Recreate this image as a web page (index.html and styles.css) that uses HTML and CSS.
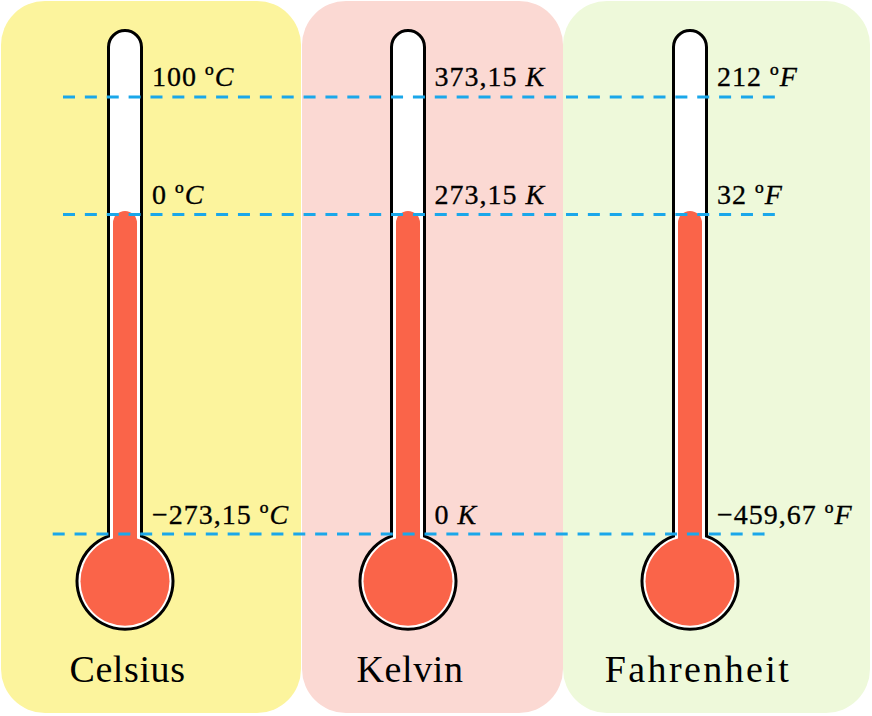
FILE: index.html
```html
<!DOCTYPE html>
<html lang="es">
<head>
<meta charset="utf-8">
<title>Escalas de temperatura</title>
<link rel="stylesheet" href="styles.css">
</head>
<body>
<div class="chart">
  <section class="panel celsius">
    <div class="thermo">
      <svg class="tube" width="104" height="606" viewBox="0 0 104 606" aria-hidden="true">
        <path d="M35.5 509.1 V20 A16.5 16.5 0 0 1 68.5 20 V509.1 A48 48 0 1 1 35.5 509.1 Z" fill="#fff" stroke="#000" stroke-width="3"/>
        <rect x="40" y="184" width="24" height="360" rx="12" fill="#fa6449"/>
        <circle cx="52" cy="554.2" r="44.5" fill="#fa6449"/>
      </svg>
      <ul class="scale">
        <li class="mark mark-boil">100 º<i>C</i></li>
        <li class="mark mark-freeze">0 º<i>C</i></li>
        <li class="mark mark-abs">−273,15 º<i>C</i></li>
      </ul>
    </div>
    <h2 class="title">Celsius</h2>
  </section>
  <section class="panel kelvin">
    <div class="thermo">
      <svg class="tube" width="104" height="606" viewBox="0 0 104 606" aria-hidden="true">
        <path d="M35.5 509.1 V20 A16.5 16.5 0 0 1 68.5 20 V509.1 A48 48 0 1 1 35.5 509.1 Z" fill="#fff" stroke="#000" stroke-width="3"/>
        <rect x="40" y="184" width="24" height="360" rx="12" fill="#fa6449"/>
        <circle cx="52" cy="554.2" r="44.5" fill="#fa6449"/>
      </svg>
      <ul class="scale">
        <li class="mark mark-boil">373,15 <i>K</i></li>
        <li class="mark mark-freeze">273,15 <i>K</i></li>
        <li class="mark mark-abs">0 <i>K</i></li>
      </ul>
    </div>
    <h2 class="title">Kelvin</h2>
  </section>
  <section class="panel fahrenheit">
    <div class="thermo">
      <svg class="tube" width="104" height="606" viewBox="0 0 104 606" aria-hidden="true">
        <path d="M35.5 509.1 V20 A16.5 16.5 0 0 1 68.5 20 V509.1 A48 48 0 1 1 35.5 509.1 Z" fill="#fff" stroke="#000" stroke-width="3"/>
        <rect x="40" y="184" width="24" height="360" rx="12" fill="#fa6449"/>
        <circle cx="52" cy="554.2" r="44.5" fill="#fa6449"/>
      </svg>
      <ul class="scale">
        <li class="mark mark-boil">212 º<i>F</i></li>
        <li class="mark mark-freeze">32 º<i>F</i></li>
        <li class="mark mark-abs">−459,67 º<i>F</i></li>
      </ul>
    </div>
    <h2 class="title">Fahrenheit</h2>
  </section>
  <svg class="guides" width="872" height="716" viewBox="0 0 872 716" aria-hidden="true">
    <line x1="63" y1="97" x2="775" y2="97"/>
    <line x1="63" y1="214.5" x2="775" y2="214.5"/>
    <line x1="52.7" y1="534" x2="764.7" y2="534"/>
  </svg>
</div>
</body>
</html>
```

FILE: styles.css
```css
html, body {
  margin: 0;
  padding: 0;
  background: #ffffff;
}

body {
  font-family: "Liberation Serif", "Times New Roman", serif;
  color: #000;
}

.chart {
  position: relative;
  width: 872px;
  height: 716px;
  box-sizing: border-box;
  padding: 1px 0 0 1px;
  display: flex;
  align-items: flex-start;
  overflow: hidden;
}

.panel {
  height: 712px;
  box-sizing: border-box;
  border-radius: 44px;
  padding-top: 26px;
  display: flex;
  flex-direction: column;
  align-items: flex-start;
}

.celsius {
  width: 300px;
  margin-right: 1px;
  background: #fcf49d;
  padding-left: 72px;
}

.kelvin {
  width: 261px;
  background: #fbd9d3;
  padding-left: 53.5px;
}

.fahrenheit {
  width: 307px;
  background: #eef9da;
  padding-left: 75px;
}

.thermo {
  display: flex;
  align-items: flex-start;
}

.tube {
  display: block;
  flex: none;
}

.scale {
  list-style: none;
  margin: 0 0 0 -25px;
  padding: 35.5px 0 0 0;
  display: flex;
  flex-direction: column;
}

.mark {
  font-size: 28px;
  line-height: 28px;
  letter-spacing: 1px;
  white-space: nowrap;
  -webkit-text-stroke: 0.3px #000;
}

.mark i {
  font-style: italic;
}

.mark-freeze {
  margin-top: 90px;
}

.mark-abs {
  margin-top: 292.5px;
}

.title {
  width: 104px;
  margin: 17px 0 0 0;
  display: flex;
  justify-content: center;
  white-space: nowrap;
  font-size: 38px;
  line-height: 38px;
  font-weight: normal;
  letter-spacing: 0.6px;
}

.celsius .title {
  margin-left: 2.5px;
}

.kelvin .title {
  margin-left: 2.5px;
}

.fahrenheit .title {
  margin-left: 8px;
  letter-spacing: 2.4px;
}

.guides {
  position: absolute;
  left: 0;
  top: 0;
  pointer-events: none;
}

.guides line {
  stroke: #1aa7ea;
  stroke-width: 3.2;
  stroke-dasharray: 12 9.87;
}
```
